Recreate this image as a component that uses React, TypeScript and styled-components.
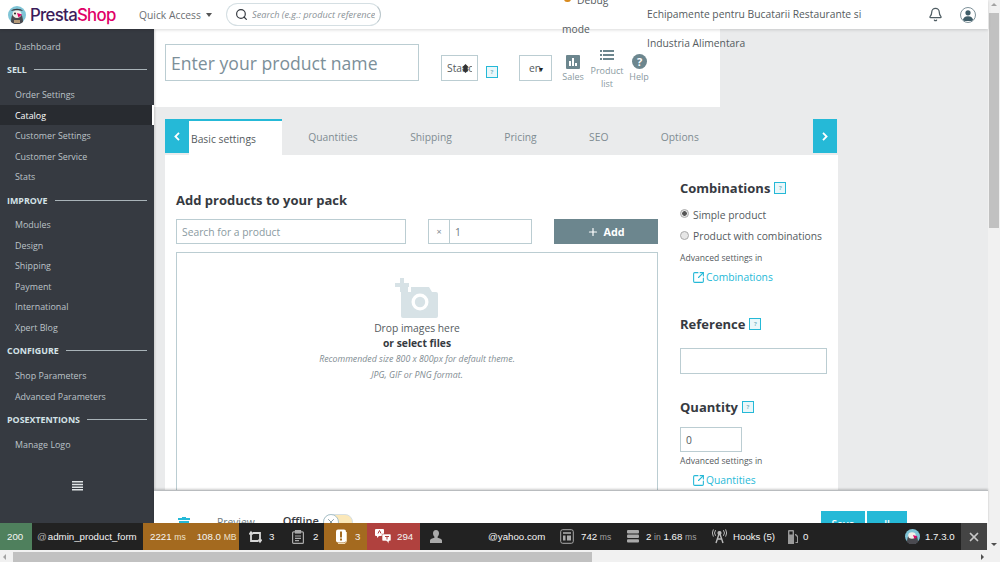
import React from 'react';
import styled, { createGlobalStyle } from 'styled-components';
import { Search, Bell, SquareArrowOutUpRight, X, Plus } from 'lucide-react';

const Global = createGlobalStyle`
  html, body {
    margin: 0;
    padding: 0;
    width: 1000px;
    height: 562px;
    overflow: hidden;
    background: #fff;
    font-family: "Open Sans", "Liberation Sans", sans-serif;
  }
  * { box-sizing: border-box; }
`;

const Frame = styled.div`
  width: 1000px;
  height: 562px;
  display: flex;
  flex-direction: column;
  overflow: hidden;
`;

const Upper = styled.div`
  flex: 1;
  min-height: 0;
  display: flex;
`;

const Page = styled.div`
  width: 988px;
  display: flex;
  flex-direction: column;
  background: #f1f1f1;
`;

/* header */
const Header = styled.header`
  height: 29px;
  flex: none;
  background: #fff;
  display: flex;
  align-items: flex-start;
  position: relative;
  z-index: 3;
  box-shadow: 0 1px 3px rgba(0, 0, 0, 0.15);
`;

const Logo = styled.div`
  width: 139px;
  height: 29px;
  flex: none;
  padding-left: 8px;
  display: flex;
  align-items: center;
  gap: 4px;
`;

const LogoText = styled.span`
  font-family: Inter, "Noto Sans", sans-serif;
  font-size: 16.8px;
  font-weight: 500;
  letter-spacing: -0.7px;
  color: #3b1c5a;
  b { font-weight: 500; color: #df0067; }
`;

const QuickAccess = styled.div`
  width: 87px;
  height: 29px;
  flex: none;
  display: flex;
  align-items: center;
  gap: 5px;
  font-size: 10.3px;
  color: #6c6f73;
  &::after {
    content: '';
    border: 3px solid transparent;
    border-top: 4px solid #555;
    margin-top: 4px;
  }
`;

const SearchBox = styled.div`
  width: 155px;
  height: 23px;
  margin-top: 3px;
  flex: none;
  border: 1px solid #d5dfe3;
  border-right-color: #b9c6cb;
  border-radius: 12px;
  display: flex;
  align-items: center;
  gap: 4px;
  padding: 0 5px 0 8px;
  svg { flex: none; color: #363a41; }
`;

const SearchInput = styled.input`
  flex: 1;
  min-width: 0;
  height: 16px;
  border: none;
  outline: none;
  padding: 0;
  background: transparent;
  font-family: inherit;
  font-size: 9.2px;
  font-style: italic;
  &::placeholder {
    color: #8a9297;
    opacity: 1;
  }
`;

const DebugMode = styled.div`
  width: 85px;
  margin-left: 181px;
  margin-top: -14px;
  flex: none;
  position: relative;
  font-size: 10.3px;
  line-height: 29px;
  color: #555b60;
  span { padding-left: 15px; position: relative; }
  span::before {
    content: '';
    position: absolute;
    left: 2px;
    top: 1px;
    width: 7px;
    height: 8px;
    border-radius: 3px;
    background: #d98b1f;
  }
`;

const ShopName = styled.div`
  width: 245px;
  flex: none;
  font-size: 10.3px;
  line-height: 29px;
  color: #555b60;
`;

const HeaderIcons = styled.div`
  margin-left: 36px;
  height: 29px;
  display: flex;
  align-items: center;
  gap: 17px;
  color: #4f5d63;
`;

const AvatarCircle = styled.div`
  width: 16px;
  height: 16px;
  border-radius: 50%;
  border: 1px solid #7e9199;
  display: flex;
  align-items: center;
  justify-content: center;
  overflow: hidden;
`;

/* sidebar */
const Body = styled.div`
  flex: 1;
  min-height: 0;
  display: flex;
`;

const Sidebar = styled.nav`
  width: 154px;
  flex: none;
  background: #363a41;
  padding-top: 7px;
  display: flex;
  flex-direction: column;
  box-shadow: 1px 0 2px rgba(0, 0, 0, 0.15);
  position: relative;
  z-index: 1;
`;

const NavItem = styled.a<{ $active?: boolean }>`
  height: 20.5px;
  flex: none;
  display: flex;
  align-items: center;
  padding-left: 15px;
  font-size: 8.9px;
  color: ${({ $active }) => ($active ? '#fff' : '#bcc3c8')};
  background: ${({ $active }) => ($active ? '#282b30' : 'transparent')};
  border-right: ${({ $active }) => ($active ? '2px solid #fff' : 'none')};
`;

const NavSection = styled.div`
  height: 27.8px;
  flex: none;
  display: flex;
  align-items: center;
  gap: 7px;
  padding: 0 7px 1px 7px;
  font-size: 8.9px;
  font-weight: 700;
  color: #d4e2e7;
  &::after {
    content: '';
    flex: 1;
    height: 1px;
    background: #a9b3b8;
  }
`;

const Collapse = styled.div`
  margin-top: 26px;
  display: flex;
  justify-content: center;
  color: #dfe3e6;
`;

/* main */
const MainColumn = styled.div`
  flex: 1;
  min-width: 0;
  display: flex;
  flex-direction: column;
`;

const Main = styled.main`
  flex: 1;
  min-height: 0;
  overflow: hidden;
  background: #eaebec;
  display: flex;
  flex-direction: column;
  align-items: flex-start;
`;

const HeadPanel = styled.div`
  width: 566px;
  height: 78px;
  flex: none;
  background: #fff;
  padding: 15px 0 0 11px;
  display: flex;
  align-items: flex-start;
`;

const NameInput = styled.div`
  width: 254px;
  height: 37px;
  flex: none;
  border: 1px solid #bbcdd2;
  display: flex;
  align-items: center;
  padding-left: 5px;
  font-size: 17.6px;
  color: #7c8f99;
`;

const MiniSelect = styled.div<{ $w: number; $ml: number; $pl: number }>`
  width: ${({ $w }) => $w}px;
  margin-left: ${({ $ml }) => $ml}px;
  height: 26px;
  margin-top: 11px;
  flex: none;
  border: 1px solid #bbcdd2;
  display: flex;
  align-items: center;
  padding: 0 5px 0 ${({ $pl }) => $pl}px;
  position: relative;
  font-size: 10.3px;
  color: #555b60;
  white-space: nowrap;
`;

const MiniLabel = styled.span`
  flex: 1;
  overflow: hidden;
`;

const MiniArrow = styled.span<{ $right: number }>`
  position: absolute;
  right: ${({ $right }) => $right}px;
  display: flex;
  font-size: 8px;
  color: #222;
`;

const HelpBox = styled.span<{ $ml?: number; $mt?: number }>`
  width: 12px;
  height: 12px;
  flex: none;
  display: inline-flex;
  align-items: center;
  justify-content: center;
  margin-left: ${({ $ml }) => $ml ?? 0}px;
  margin-top: ${({ $mt }) => $mt ?? 0}px;
  border: 1.5px solid #25b9d7;
  background: #eaf7fa;
  font-size: 6px;
  font-weight: 700;
  line-height: 1;
  color: #7fb7c6;
`;

const ToolLink = styled.div<{ $w: number; $ml: number; $mt: number; $gap?: number }>`
  width: ${({ $w }) => $w}px;
  margin-left: ${({ $ml }) => $ml}px;
  margin-top: ${({ $mt }) => $mt}px;
  flex: none;
  display: flex;
  flex-direction: column;
  align-items: center;
  font-size: 9px;
  line-height: 13px;
  text-align: center;
  color: #8a9aa1;
  svg { display: block; margin-bottom: ${({ $gap }) => $gap ?? 1}px; }
`;

const TabStrip = styled.div`
  margin: 12px 0 0 11px;
  width: 673px;
  height: 36px;
  flex: none;
  display: flex;
  align-items: stretch;
`;

const ArrowButton = styled.div<{ $end?: boolean }>`
  width: 24px;
  height: 34px;
  flex: none;
  margin: ${({ $end }) => ($end ? '0 1px 0 auto' : '0')};
  background: #25b9d7;
  display: flex;
  align-items: center;
  justify-content: center;
`;

const ActiveTab = styled.div`
  width: 93px;
  flex: none;
  background: #fff;
  position: relative;
  display: flex;
  align-items: flex-start;
  &::before {
    content: '';
    position: absolute;
    top: 0;
    left: -24px;
    right: 0;
    height: 2px;
    background: #25b9d7;
  }
`;

const ActiveLabel = styled.span`
  margin: 13px 0 0 2px;
  font-size: 10.3px;
  line-height: 15px;
  color: #555b60;
`;

const Tab = styled.div`
  flex: none;
  padding: 11px 26.2px 0;
  font-size: 10.3px;
  line-height: 15px;
  color: #7f8c92;
`;

const Card = styled.section`
  width: 673px;
  margin-left: 11px;
  flex: 1;
  min-height: 0;
  background: #fff;
  padding: 35px 11px 0;
  display: flex;
  gap: 22px;
`;

const LeftColumn = styled.div`
  width: 482px;
  flex: none;
`;

const SectionTitle = styled.h2`
  margin: 0;
  height: 20px;
  display: flex;
  align-items: center;
  gap: 4px;
  font-size: 13px;
  font-weight: 700;
  color: #363a41;
`;

const InputRow = styled.div`
  margin-top: 9px;
  display: flex;
  height: 25px;
`;

const TextField = styled.div<{ $w: number; $h?: number; $mt?: number; $dark?: boolean }>`
  width: ${({ $w }) => $w}px;
  height: ${({ $h }) => $h ?? 25}px;
  margin-top: ${({ $mt }) => $mt ?? 0}px;
  flex: none;
  border: 1px solid #bbcdd2;
  display: flex;
  align-items: center;
  padding-left: 5px;
  font-size: 10.3px;
  color: ${({ $dark }) => ($dark ? '#555b60' : '#8a9aa1')};
`;

const QtyGroup = styled.div`
  width: 104px;
  margin-left: 22px;
  display: flex;
  border: 1px solid #bbcdd2;
  font-size: 10.3px;
  color: #6c7a80;
`;

const QtyAddon = styled.span`
  width: 21px;
  border-right: 1px solid #bbcdd2;
  display: flex;
  align-items: center;
  justify-content: center;
  font-size: 9px;
  color: #7f8c92;
`;

const QtyValue = styled.span`
  padding-left: 5px;
  align-self: center;
`;

const AddButton = styled.div`
  width: 104px;
  margin-left: 22px;
  background: #6c868e;
  color: #fff;
  font-size: 10.8px;
  font-weight: 700;
  display: flex;
  align-items: center;
  justify-content: center;
  gap: 4px;
`;

const DropZone = styled.div`
  margin-top: 8px;
  height: 300px;
  border: 1px solid #bbcdd2;
  padding-top: 25px;
  display: flex;
  flex-direction: column;
  align-items: center;
  svg { margin-bottom: 3px; }
`;

const DropLine = styled.div<{ $bold?: boolean }>`
  height: 15px;
  line-height: 15px;
  font-size: 10.3px;
  font-weight: ${({ $bold }) => ($bold ? 700 : 400)};
  color: ${({ $bold }) => ($bold ? '#363a41' : '#555b60')};
`;

const DropNote = styled.div`
  height: 16px;
  line-height: 16px;
  font-size: 8.8px;
  font-style: italic;
  color: #7f8c92;
`;

const RightColumn = styled.aside`
  width: 147px;
  flex: none;
  margin-top: -12px;
`;

const RadioGroup = styled.div`
  margin-top: 6px;
`;

const RadioRow = styled.label`
  height: 21.5px;
  display: flex;
  align-items: center;
  gap: 4px;
  font-size: 10.3px;
  color: #555b60;
`;

const Radio = styled.span<{ $on?: boolean }>`
  width: 9px;
  height: 9px;
  margin-top: -2px;
  border-radius: 50%;
  border: 1px solid #a9a9a9;
  background: ${({ $on }) => ($on ? 'radial-gradient(circle, #555 0 2px, #e6e6e6 2.6px)' : '#e6e6e6')};
`;

const SmallNote = styled.div<{ $mt: number }>`
  font-size: 8.6px;
  line-height: 13px;
  margin-top: ${({ $mt }) => $mt}px;
  color: #555b60;
`;

const SideLink = styled.a<{ $mt: number }>`
  margin: ${({ $mt }) => $mt}px 0 0 12px;
  display: flex;
  align-items: center;
  height: 16px;
  gap: 1px;
  font-size: 10.3px;
  color: #25b9d7;
`;

const SideBlock = styled.div<{ $mt: number }>`
  margin-top: ${({ $mt }) => $mt}px;
`;

/* footer */
const Footer = styled.footer`
  height: 33px;
  flex: none;
  position: relative;
  z-index: 2;
  background: #fff;
  border-top: 1px solid #b9bcbf;
  box-shadow: 0 -1px 2px rgba(0, 0, 0, 0.2);
  overflow: hidden;
  display: flex;
  align-items: flex-start;
  padding: 20px 81px 0 24px;
  font-size: 10.3px;
`;

const Trash = styled.div`
  width: 12px;
  margin-top: 6px;
  flex: none;
  color: #25b9d7;
`;

const Preview = styled.span`
  margin-left: 27px;
  margin-top: 4px;
  color: #6c7a80;
`;

const Offline = styled.span`
  margin-left: 28px;
  margin-top: 2px;
  font-size: 11px;
  font-weight: 600;
  color: #363a41;
`;

const Toggle = styled.div`
  width: 30px;
  height: 16px;
  margin: 3px 0 0 4px;
  border-radius: 8px;
  background: #fbe8b9;
  border: 1px solid #d6dfe3;
  display: flex;
`;

const ToggleKnob = styled.span`
  width: 16px;
  height: 16px;
  margin: -1px 0 0 -1px;
  border-radius: 50%;
  background: #fff;
  border: 1px solid #a9c2ca;
  display: flex;
  align-items: center;
  justify-content: center;
  color: #6c868e;
`;

const FooterButtons = styled.div`
  margin-left: auto;
  display: flex;
  gap: 2px;
`;

const FooterButton = styled.div<{ $w: number }>`
  width: ${({ $w }) => $w}px;
  height: 30px;
  flex: none;
  background: #25b9d7;
  color: #fff;
  text-align: center;
  font-weight: 600;
  padding-top: 6px;
`;

/* debug toolbar */
const DebugBar = styled.div`
  height: 27px;
  flex: none;
  position: relative;
  z-index: 4;
  margin-bottom: 1px;
  margin-right: 1px;
  background: #222;
  display: flex;
  align-items: stretch;
  font-family: "Liberation Sans", Arial, sans-serif;
  font-size: 9.7px;
  color: #f5f5f5;
  white-space: nowrap;
`;

const Block = styled.div<{ $w: number; $bg?: string; $gap?: number; $pl?: number }>`
  width: ${({ $w }) => $w}px;
  flex: none;
  display: flex;
  align-items: center;
  background: ${({ $bg }) => $bg ?? 'transparent'};
  gap: ${({ $gap }) => $gap ?? 0}px;
  padding-left: ${({ $pl }) => $pl ?? 0}px;
`;

const Metric = styled.div<{ $w: number; $gap: number }>`
  width: ${({ $w }) => $w}px;
  flex: none;
  display: flex;
  align-items: center;
  gap: ${({ $gap }) => $gap}px;
`;

const Unit = styled.span`
  font-size: 8.6px;
  color: #a0a0a0;
`;

const OrangeUnit = styled(Unit)`
  color: #f0e2cc;
`;

const AtSign = styled.span`
  color: #b0b0b0;
  margin-right: 1px;
`;

const CloseBlock = styled.div`
  width: 26px;
  margin-left: auto;
  background: #444;
  display: flex;
  align-items: center;
  justify-content: center;
  color: #c8c8c8;
`;

/* scrollbars */
const VerticalScroll = styled.div`
  width: 12px;
  flex: none;
  background: #f1f1f1;
  display: flex;
  flex-direction: column;
  align-items: center;
  padding: 3px 1px 0;
`;

const VerticalThumb = styled.div`
  width: 10px;
  height: 215px;
  margin-top: 7px;
  background: #c1c1c1;
`;

const Triangle = styled.span<{ $dir: 'up' | 'down' | 'left' | 'right' }>`
  width: 0;
  height: 0;
  flex: none;
  border: 3px solid transparent;
  ${({ $dir }) => {
    if ($dir === 'up') return 'border-bottom: 3px solid #a3a3a3; border-top: none;';
    if ($dir === 'down') return 'border-top: 3px solid #505050; border-bottom: none; margin: auto 0 5px;';
    if ($dir === 'left') return 'border-right: 3px solid #a3a3a3; border-left: none;';
    return 'border-left: 3px solid #505050; border-right: none; margin-left: auto;';
  }}
`;

const HorizontalScroll = styled.div`
  height: 11px;
  flex: none;
  background: #f1f1f1;
  display: flex;
  align-items: center;
  padding: 0 16px 0 3px;
`;

const HorizontalThumb = styled.div`
  width: 579px;
  height: 10px;
  margin-left: 7px;
  background: #c1c1c1;
`;

const Puffin = () => (
  <svg width="18" height="18" viewBox="0 0 18 18">
    <circle cx="9" cy="9" r="9" fill="#7fc4d6" />
    <path d="M3 16c0-6 2-10 6-10s6 4 6 10a9 9 0 0 1-12 0z" fill="#4a4a50" />
    <ellipse cx="9" cy="8" rx="4.5" ry="4" fill="#f2eee8" />
    <path d="M3 5c2-3 10-3 12 0-3-1-9-1-12 0z" fill="#3b3b42" />
    <path d="M9 7l5 1.5-3.5 3z" fill="#df0067" />
    <circle cx="7" cy="7.5" r="1" fill="#222" />
    <path d="M6 14h6v3H6z" fill="#b59a78" />
  </svg>
);

const SelectArrows = () => (
  <svg width="9" height="9" viewBox="0 0 9 9" fill="#333">
    <path d="M4.500 0L8 3.500H1zM1 5.500h7L4.500 9z" />
    <rect x="2.500" y="3" width="4" height="3" />
  </svg>
);

const SalesIcon = () => (
  <svg width="14" height="14" viewBox="0 0 14 14">
    <rect width="14" height="14" rx="1" fill="#6c868e" />
    <path d="M3 6h2v5H3zM6 3h2v8H6zM9 8h2v3H9z" fill="#fff" />
  </svg>
);

const ListIcon = () => (
  <svg width="14" height="11" viewBox="0 0 14 11" fill="#6c868e">
    <path d="M0 0h2v2H0zM3 0h11v2H3zM0 4h2v2H0zM3 4h11v2H3zM0 8h2v2H0zM3 8h11v2H3z" />
  </svg>
);

const HelpIcon = () => (
  <svg width="15" height="15" viewBox="0 0 15 15">
    <circle cx="7.500" cy="7.500" r="7.500" fill="#6c868e" />
    <text x="7.500" y="11.500" textAnchor="middle" fontSize="11" fontWeight="700" fill="#fff" fontFamily="Open Sans">?</text>
  </svg>
);

const Chevron = ({ dir }: { dir: 'left' | 'right' }) => (
  <svg width="6" height="9" viewBox="0 0 6 9" fill="none" stroke="#fff" strokeWidth="1.8">
    <path d={dir === 'left' ? 'M5 .8L1.400 4.500 5 8.200' : 'M1 .8l3.600 3.700L1 8.200'} />
  </svg>
);

const CameraPlus = () => (
  <svg width="44" height="40" viewBox="0 0 44 40" fill="#d7e2e6">
    <path d="M6 14h3V9h4v5h3V9h18l3 5h4a2 2 0 0 1 2 2v22a2 2 0 0 1-2 2H8a2 2 0 0 1-2-2z" />
    <path d="M5 0h4v5h5v4H9v5H5V9H0V5h5z" />
    <circle cx="25" cy="24" r="8.500" fill="#fff" />
    <circle cx="25" cy="24" r="5.200" fill="#d7e2e6" />
  </svg>
);

const TrashIcon = () => (
  <svg width="12" height="14" viewBox="0 0 12 14" fill="currentColor">
    <path d="M4 0h4v1h4v2H0V1h4zM1 4h10v9a1 1 0 0 1-1 1H2a1 1 0 0 1-1-1z" />
  </svg>
);

const RouteIcon = () => (
  <svg width="13" height="14" viewBox="0 0 13 14" fill="none" stroke="#d8d8d8" strokeWidth="1.8">
    <path d="M3.500 3H11v8.500M9.500 11H2V2.500" />
    <path d="M.4 4.500L2 2.300l1.700 2.200M9.400 9.500L11 11.700l1.600-2.200" />
  </svg>
);

const ClipIcon = () => (
  <svg width="12" height="14" viewBox="0 0 12 14" fill="none" stroke="#aaa" strokeWidth="1.2">
    <rect x=".6" y="1.800" width="10.800" height="11.600" rx="1" />
    <rect x="3.500" y=".6" width="5" height="2.400" fill="#aaa" />
    <path d="M3 6h6M3 8.300h6M3 10.600h4" />
  </svg>
);

const AlertIcon = () => (
  <svg width="13" height="15" viewBox="0 0 13 15">
    <rect x="1" y="0.5" width="10" height="13" rx="2" fill="#fff" />
    <path d="M11.500 3v9.500L10 14.500H3" stroke="#f1d9b0" fill="none" />
    <rect x="5" y="2.500" width="2" height="6" fill="#a46a1f" />
    <rect x="5" y="9.500" width="2" height="2" fill="#a46a1f" />
  </svg>
);

const TranslationIcon = () => (
  <svg width="16" height="15" viewBox="0 0 16 15" fill="#fff">
    <path d="M1 0h7a1 1 0 0 1 1 1v5a1 1 0 0 1-1 1H4L2 9V7H1a1 1 0 0 1-1-1V1a1 1 0 0 1 1-1z" />
    <path d="M8 5h7a1 1 0 0 1 1 1v5a1 1 0 0 1-1 1h-1v2.500L11.500 12H8a1 1 0 0 1-1-1V6a1 1 0 0 1 1-1z" stroke="#b0413e" strokeWidth=".6" />
    <path d="M10 7.500h4M12 7.500v3" stroke="#b0413e" />
    <path d="M3 4.500l1.500-3 1.500 3" stroke="#b0413e" fill="none" />
  </svg>
);

const PersonIcon = () => (
  <svg width="12" height="13" viewBox="0 0 12 13" fill="#aaa">
    <path d="M6 0c2 0 3 1.400 3 3.300 0 1.400-.6 2.700-1.400 3.400v1.100c2 .5 4.400 1.300 4.400 2.600V13H0v-2.600c0-1.300 2.400-2.100 4.400-2.600V6.700C3.600 6 3 4.700 3 3.300 3 1.400 4 0 6 0z" />
  </svg>
);

const LayoutIcon = () => (
  <svg width="14" height="15" viewBox="0 0 14 15" fill="none" stroke="#aaa">
    <rect x=".7" y=".7" width="12.600" height="13.600" rx="2" />
    <path d="M3 4h8" strokeWidth="1.600" />
    <path d="M3 6.500h2.500v5H3zM7 6.500h4v5H7z" fill="#aaa" stroke="none" />
  </svg>
);

const DatabaseIcon = () => (
  <svg width="12" height="13" viewBox="0 0 12 13" fill="#aaa">
    <rect y="0" width="12" height="3.400" rx="1" />
    <rect y="4.600" width="12" height="3.400" rx="1" />
    <rect y="9.200" width="12" height="3.400" rx="1" />
  </svg>
);

const AntennaIcon = () => (
  <svg width="15" height="15" viewBox="0 0 15 15" fill="none" stroke="#bbb" strokeWidth="1.4">
    <circle cx="7.500" cy="4" r="1.400" fill="#bbb" />
    <path d="M7 5l-3 9M8 5l3 9M5 10h5" />
    <path d="M3.600 1.200a4.500 4.500 0 0 0 0 5.600M11.400 1.200a4.500 4.500 0 0 1 0 5.600M1.400.4a7 7 0 0 0 0 7.200M13.600.4a7 7 0 0 1 0 7.200" strokeWidth="1" />
  </svg>
);

const FuelIcon = () => (
  <svg width="10" height="14" viewBox="0 0 10 14" fill="#9a9a9a">
    <path d="M0 1a1 1 0 0 1 1-1h4a1 1 0 0 1 1 1v13H0zM1.400 1.500v3h3.200v-3z" />
    <path d="M7 4h1l2 2v7H7.500v-1H9V7L7 5z" />
  </svg>
);

const DebugLogo = () => (
  <svg width="15" height="15" viewBox="0 0 15 15">
    <circle cx="7.500" cy="7.500" r="7.500" fill="#7fc4d6" />
    <path d="M2 13c0-5 2-8 5.500-8S13 8 13 13a7.500 7.500 0 0 1-11 0z" fill="#4a4a50" />
    <ellipse cx="7" cy="6.500" rx="3.800" ry="3.300" fill="#f2eee8" />
    <path d="M8 6l4.500 1.500L9.500 10z" fill="#df0067" />
  </svg>
);

const HamburgerIcon = () => (
  <svg width="11" height="10" viewBox="0 0 11 10" fill="currentColor">
    <path d="M0 0h11v1.500H0zM0 2.700h11v1.500H0zM0 5.400h11v1.500H0zM0 8.100h11v1.500H0z" />
  </svg>
);

const UserBadge = () => (
  <svg width="14" height="14" viewBox="0 0 14 14" fill="#3f5d68">
    <circle cx="7" cy="4.800" r="2.600" />
    <path d="M1.800 13c0-3 2-4.800 5.200-4.800s5.200 1.800 5.200 4.800z" />
  </svg>
);

const navBlocks = [
  { items: ['Order Settings', 'Catalog', 'Customer Settings', 'Customer Service', 'Stats'], title: 'SELL' },
  { items: ['Modules', 'Design', 'Shipping', 'Payment', 'International', 'Xpert Blog'], title: 'IMPROVE' },
  { items: ['Shop Parameters', 'Advanced Parameters'], title: 'CONFIGURE' },
  { items: ['Manage Logo'], title: 'POSEXTENTIONS' },
];

const tabs = ['Quantities', 'Shipping', 'Pricing', 'SEO', 'Options'];

export default function App() {
  return (
    <Frame>
      <Global />
      <Upper>
        <Page>
          <Header>
            <Logo>
              <Puffin />
              <LogoText>
                Presta<b>Shop</b>
              </LogoText>
            </Logo>
            <QuickAccess>Quick Access</QuickAccess>
            <SearchBox>
              <Search size={13} strokeWidth={2.2} />
              <SearchInput placeholder="Search (e.g.: product reference, customer name…)" />
            </SearchBox>
            <DebugMode>
              <span>Debug</span>
              <br />
              mode
            </DebugMode>
            <ShopName>Echipamente pentru Bucatarii Restaurante si Industria Alimentara</ShopName>
            <HeaderIcons>
              <Bell size={15} />
              <AvatarCircle>
                <UserBadge />
              </AvatarCircle>
            </HeaderIcons>
          </Header>
          <Body>
            <Sidebar>
              <NavItem>Dashboard</NavItem>
              {navBlocks.map((block) => (
                <React.Fragment key={block.title}>
                  <NavSection>{block.title}</NavSection>
                  {block.items.map((item) => (
                    <NavItem key={item} $active={item === 'Catalog'}>
                      {item}
                    </NavItem>
                  ))}
                </React.Fragment>
              ))}
              <Collapse>
                <HamburgerIcon />
              </Collapse>
            </Sidebar>
            <MainColumn>
              <Main>
                <HeadPanel>
                  <NameInput>Enter your product name</NameInput>
                  <MiniSelect $w={37} $ml={22} $pl={5}>
                    <MiniLabel>Standard</MiniLabel>
                    <MiniArrow $right={7}>
                      <SelectArrows />
                    </MiniArrow>
                  </MiniSelect>
                  <HelpBox $ml={8} $mt={22}>?</HelpBox>
                  <MiniSelect $w={33} $ml={21} $pl={9}>
                    <MiniLabel>en</MiniLabel>
                    <MiniArrow $right={8}>▾</MiniArrow>
                  </MiniSelect>
                  <ToolLink $w={34} $ml={4} $mt={11}>
                    <SalesIcon />
                    Sales
                  </ToolLink>
                  <ToolLink $w={38} $ml={-2} $mt={6} $gap={3}>
                    <ListIcon />
                    Product list
                  </ToolLink>
                  <ToolLink $w={30} $ml={-2} $mt={10}>
                    <HelpIcon />
                    Help
                  </ToolLink>
                </HeadPanel>
                <TabStrip>
                  <ArrowButton>
                    <Chevron dir="left" />
                  </ArrowButton>
                  <ActiveTab>
                    <ActiveLabel>Basic settings</ActiveLabel>
                  </ActiveTab>
                  {tabs.map((tab) => (
                    <Tab key={tab}>{tab}</Tab>
                  ))}
                  <ArrowButton $end>
                    <Chevron dir="right" />
                  </ArrowButton>
                </TabStrip>
                <Card>
                  <LeftColumn>
                    <SectionTitle>Add products to your pack</SectionTitle>
                    <InputRow>
                      <TextField $w={230}>Search for a product</TextField>
                      <QtyGroup>
                        <QtyAddon>×</QtyAddon>
                        <QtyValue>1</QtyValue>
                      </QtyGroup>
                      <AddButton>
                        <Plus size={12} strokeWidth={2.4} />
                        Add
                      </AddButton>
                    </InputRow>
                    <DropZone>
                      <CameraPlus />
                      <DropLine>Drop images here</DropLine>
                      <DropLine $bold>or select files</DropLine>
                      <DropNote>Recommended size 800 x 800px for default theme.</DropNote>
                      <DropNote>JPG, GIF or PNG format.</DropNote>
                    </DropZone>
                  </LeftColumn>
                  <RightColumn>
                    <SectionTitle>
                      Combinations <HelpBox>?</HelpBox>
                    </SectionTitle>
                    <RadioGroup>
                      <RadioRow>
                        <Radio $on />
                        Simple product
                      </RadioRow>
                      <RadioRow>
                        <Radio />
                        Product with combinations
                      </RadioRow>
                    </RadioGroup>
                    <SmallNote $mt={5}>Advanced settings in</SmallNote>
                    <SideLink $mt={4}>
                      <SquareArrowOutUpRight size={13} />
                      Combinations
                    </SideLink>
                    <SideBlock $mt={29}>
                      <SectionTitle>
                        Reference <HelpBox>?</HelpBox>
                      </SectionTitle>
                      <TextField $w={147} $h={26} $mt={14} />
                    </SideBlock>
                    <SideBlock $mt={23}>
                      <SectionTitle>
                        Quantity <HelpBox>?</HelpBox>
                      </SectionTitle>
                      <TextField $w={62} $mt={10} $dark>0</TextField>
                    </SideBlock>
                    <SmallNote $mt={3}>Advanced settings in</SmallNote>
                    <SideLink $mt={4}>
                      <SquareArrowOutUpRight size={13} />
                      Quantities
                    </SideLink>
                  </RightColumn>
                </Card>
              </Main>
              <Footer>
                <Trash>
                  <TrashIcon />
                </Trash>
                <Preview>Preview</Preview>
                <Offline>Offline</Offline>
                <Toggle>
                  <ToggleKnob>
                    <X size={10} />
                  </ToggleKnob>
                </Toggle>
                <FooterButtons>
                  <FooterButton $w={44}>Save</FooterButton>
                  <FooterButton $w={40}>ll</FooterButton>
                </FooterButtons>
              </Footer>
            </MainColumn>
          </Body>
          <DebugBar>
            <Block $w={32} $bg="#4f805d" $pl={7}>200</Block>
            <Block $w={111} $pl={5}>
              <AtSign>@</AtSign>admin_product_form
            </Block>
            <Block $w={96} $bg="#a46a1f" $pl={7} $gap={11}>
              <span>
                2221 <OrangeUnit>ms</OrangeUnit>
              </span>
              <span>
                108.0 <OrangeUnit>MB</OrangeUnit>
              </span>
            </Block>
            <Block $w={85} $pl={10}>
              <Metric $w={43} $gap={7}>
                <RouteIcon />3
              </Metric>
              <Metric $w={30} $gap={9}>
                <ClipIcon />2
              </Metric>
            </Block>
            <Block $w={43} $bg="#a46a1f" $pl={11} $gap={7}>
              <AlertIcon />3
            </Block>
            <Block $w={53} $bg="#b0413e" $pl={8} $gap={6}>
              <TranslationIcon />294
            </Block>
            <Block $w={68} $pl={10}>
              <PersonIcon />
            </Block>
            <Block $w={72}>@yahoo.com</Block>
            <Metric $w={67} $gap={7}>
              <LayoutIcon />
              <span>
                742 <Unit>ms</Unit>
              </span>
            </Metric>
            <Metric $w={85} $gap={7}>
              <DatabaseIcon />
              <span>
                2 <Unit>in</Unit> 1.68 <Unit>ms</Unit>
              </span>
            </Metric>
            <Metric $w={76} $gap={6}>
              <AntennaIcon />
              Hooks (5)
            </Metric>
            <Metric $w={117} $gap={5}>
              <FuelIcon />0
            </Metric>
            <Metric $w={50} $gap={5}>
              <DebugLogo />
              1.7.3.0
            </Metric>
            <CloseBlock>
              <X size={14} strokeWidth={3} />
            </CloseBlock>
          </DebugBar>
        </Page>
        <VerticalScroll>
          <Triangle $dir="up" />
          <VerticalThumb />
          <Triangle $dir="down" />
        </VerticalScroll>
      </Upper>
      <HorizontalScroll>
        <Triangle $dir="left" />
        <HorizontalThumb />
        <Triangle $dir="right" />
      </HorizontalScroll>
    </Frame>
  );
}
